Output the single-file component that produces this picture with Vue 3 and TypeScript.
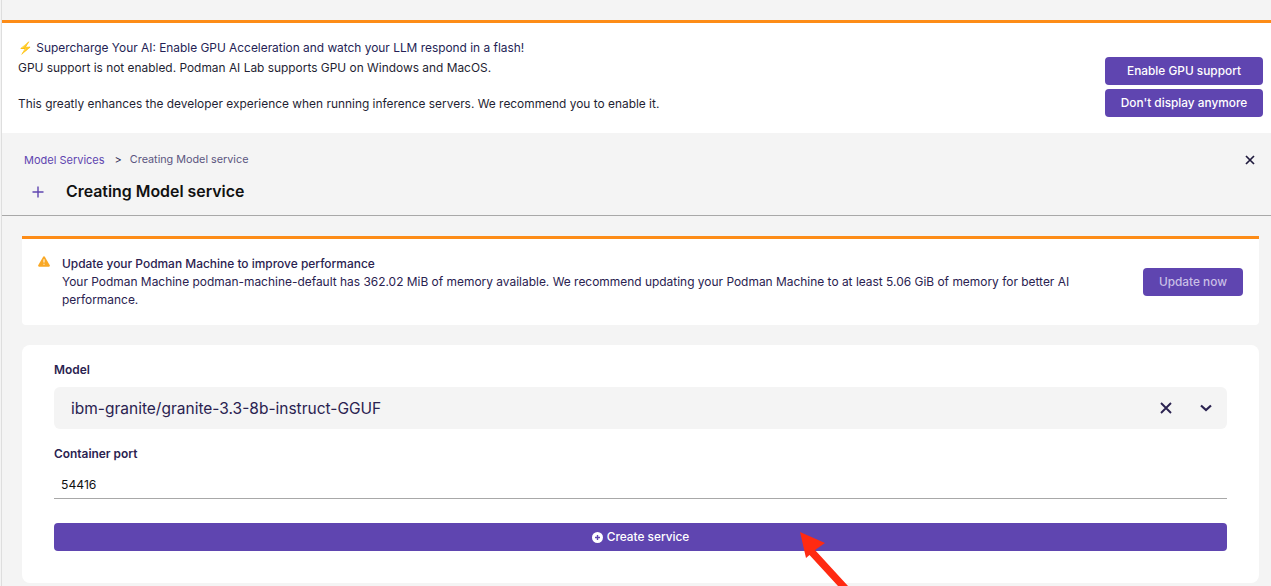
<script setup lang="ts">
const bannerTitle = 'Supercharge Your AI: Enable GPU Acceleration and watch your LLM respond in a flash!'
const warning =
  'Your Podman Machine podman-machine-default has 362.02 MiB of memory available. We recommend updating your Podman Machine to at least 5.06 GiB of memory for better AI performance.'
</script>

<template>
  <div class="page">
    <div class="top-gap"></div>
    <section class="banner">
      <div class="banner-text">
        <div class="banner-title"><span class="bolt">⚡</span> {{ bannerTitle }}</div>
        <div>GPU support is not enabled. Podman AI Lab supports GPU on Windows and MacOS.</div>
        <div class="banner-gap">This greatly enhances the developer experience when running inference servers. We recommend you to enable it.</div>
      </div>
      <div class="banner-actions">
        <button class="btn">Enable GPU support</button>
        <button class="btn">Don't display anymore</button>
      </div>
    </section>

    <header class="header">
      <div class="crumbs">
        <a class="crumb-link">Model Services</a>
        <span class="crumb-sep">&gt;</span>
        <span class="crumb-cur">Creating Model service</span>
        <svg class="close" width="10" height="10" viewBox="0 0 10 10">
          <path d="M1 1l8 8M9 1l-8 8" stroke="#1f1a3d" stroke-width="1.7" fill="none" />
        </svg>
      </div>
      <div class="title-row">
        <svg class="plus" width="12" height="12" viewBox="0 0 12 12">
          <path d="M6 0.5v11M0.5 6h11" stroke="#5f45b0" stroke-width="1.4" fill="none" />
        </svg>
        <h1>Creating Model service</h1>
      </div>
    </header>

    <main class="content">
      <section class="warn">
        <svg class="warn-icon" width="12" height="11" viewBox="0 0 13 12">
          <path d="M6.5 0.3c.4 0 .7.2.9.5l5.4 9.4c.4.7 0 1.5-.9 1.5H1.1c-.9 0-1.3-.8-.9-1.5L5.6.8c.2-.3.5-.5.9-.5z" fill="#f9a825" />
          <path d="M6.5 3.6v3.6M6.5 8.4v1.2" stroke="#fff" stroke-width="1.1" fill="none" />
        </svg>
        <div class="warn-text">
          <div class="warn-title">Update your Podman Machine to improve performance</div>
          <div>{{ warning }}</div>
        </div>
        <button class="btn btn-update">Update now</button>
      </section>

      <section class="card">
        <label class="label">Model</label>
        <div class="select">
          <span class="select-value">ibm-granite/granite-3.3-8b-instruct-GGUF</span>
          <svg class="select-clear" width="12" height="12" viewBox="0 0 12 12">
            <path d="M1 1l10 10M11 1L1 11" stroke="#2a2250" stroke-width="1.9" fill="none" />
          </svg>
          <svg class="select-chev" width="12" height="8" viewBox="0 0 12 8">
            <path d="M1 1.5l5 4.5 5-4.5" stroke="#2a2250" stroke-width="2.2" fill="none" />
          </svg>
        </div>
        <label class="label label-port">Container port</label>
        <div class="port">54416</div>
        <button class="btn btn-create">
          <svg width="11" height="11" viewBox="0 0 11 11">
            <circle cx="5.5" cy="5.5" r="5.5" fill="#fff" />
            <path d="M5.5 3v5M3 5.5h5" stroke="#5f45b0" stroke-width="1.4" fill="none" />
          </svg>
          Create service
        </button>
      </section>
    </main>

    <svg class="arrow" width="50" height="54" viewBox="0 0 50 54">
      <path d="M0 0L25 11L15 18L48 54L38 54L9.5 23L6 26z" fill="#ff2a12" />
    </svg>
  </div>
</template>

<style>
body {
  margin: 0;
}
</style>

<style scoped>
.page {
  position: relative;
  width: 1271px;
  height: 586px;
  overflow: hidden;
  box-sizing: border-box;
  padding-left: 2px;
  background: linear-gradient(90deg, #f4f4f4 1px, #dedede 1px 2px, #f4f4f4 2px);
  font-family: Inter, 'Liberation Sans', sans-serif;
  font-size: 11.92px;
  color: #1f1f33;
}

.top-gap {
  height: 20px;
}

.banner {
  display: flex;
  justify-content: space-between;
  height: 113px;
  box-sizing: border-box;
  border-top: 3px solid #fd8c17;
  background: #fff;
  padding: 16px 8px 0 16px;
  line-height: 18px;
}

.banner-title {
  color: #251f55;
  margin-bottom: 2px;
  font-size: 11.9px;
}

.bolt {
  color: #f5b32f;
}

.banner-gap {
  margin-top: 18px;
}

.banner-actions {
  display: flex;
  flex-direction: column;
  gap: 4px;
  margin-top: 18px;
}

.btn {
  border: none;
  border-radius: 4px;
  background: #5f45b0;
  color: #fff;
  font-family: inherit;
  font-size: 11.85px;
  font-weight: 500;
  height: 28px;
  width: 158px;
  padding: 0;
}

.header {
  height: 83px;
  box-sizing: border-box;
  border-bottom: 1px solid #a8a8a8;
  padding-top: 20px;
}

.crumbs {
  display: flex;
  align-items: center;
  padding: 0 16px 0 22px;
  font-size: 11px;
  line-height: 14px;
}

.crumb-link {
  color: #5f45b0;
}

.crumb-sep {
  margin: 0 8px 0 10px;
  color: #35305a;
}

.crumb-cur {
  color: #5b5680;
  font-size: 10.8px;
}

.close {
  margin-left: auto;
}

.title-row {
  display: flex;
  align-items: center;
  padding: 13px 0 0 30px;
}

.plus {
  margin-right: 22px;
}

h1 {
  margin: 0;
  font-size: 15.9px;
  line-height: 24px;
  font-weight: 600;
  color: #111;
}

.content {
  padding: 20px 12px 0 20px;
}

.warn {
  display: flex;
  align-items: center;
  height: 89px;
  box-sizing: border-box;
  border-top: 3px solid #fd8c17;
  background: #fff;
  padding: 0 16px;
  border-radius: 0 0 4px 4px;
  color: #2a2250;
  font-size: 11.95px;
  line-height: 18px;
}

.warn-icon {
  align-self: flex-start;
  margin-top: 17px;
  margin-right: 12px;
  flex: none;
}

.warn-text {
  width: 1030px;
}

.warn-title {
  font-weight: 500;
}

.btn-update {
  margin-left: auto;
  width: 100px;
  color: #c9bfe6;
}

.card {
  display: flex;
  flex-direction: column;
  margin-top: 20px;
  height: 238px;
  box-sizing: border-box;
  background: #fff;
  border-radius: 8px;
  padding: 17px 32px 0;
}

.label {
  font-weight: 600;
  line-height: 16px;
  color: #2a2250;
}

.select {
  display: flex;
  align-items: center;
  height: 42px;
  margin-top: 9px;
  padding: 0 15px 0 17px;
  border-radius: 6px;
  background: #f4f4f4;
  color: #2a2250;
  font-size: 15.5px;
}

.select-clear {
  margin-left: auto;
  margin-right: 28px;
}

.label-port {
  margin-top: 17px;
}

.port {
  margin-top: 8px;
  height: 29px;
  box-sizing: border-box;
  padding: 7px 7px 0;
  border-bottom: 1px solid #a8a8a8;
  font-size: 12.2px;
  line-height: 16px;
  color: #111;
}

.btn-create {
  display: flex;
  align-items: center;
  justify-content: center;
  gap: 4px;
  width: 100%;
  margin-top: 24px;
  flex: none;
}

.arrow {
  position: absolute;
  left: 800px;
  top: 532px;
}
</style>
